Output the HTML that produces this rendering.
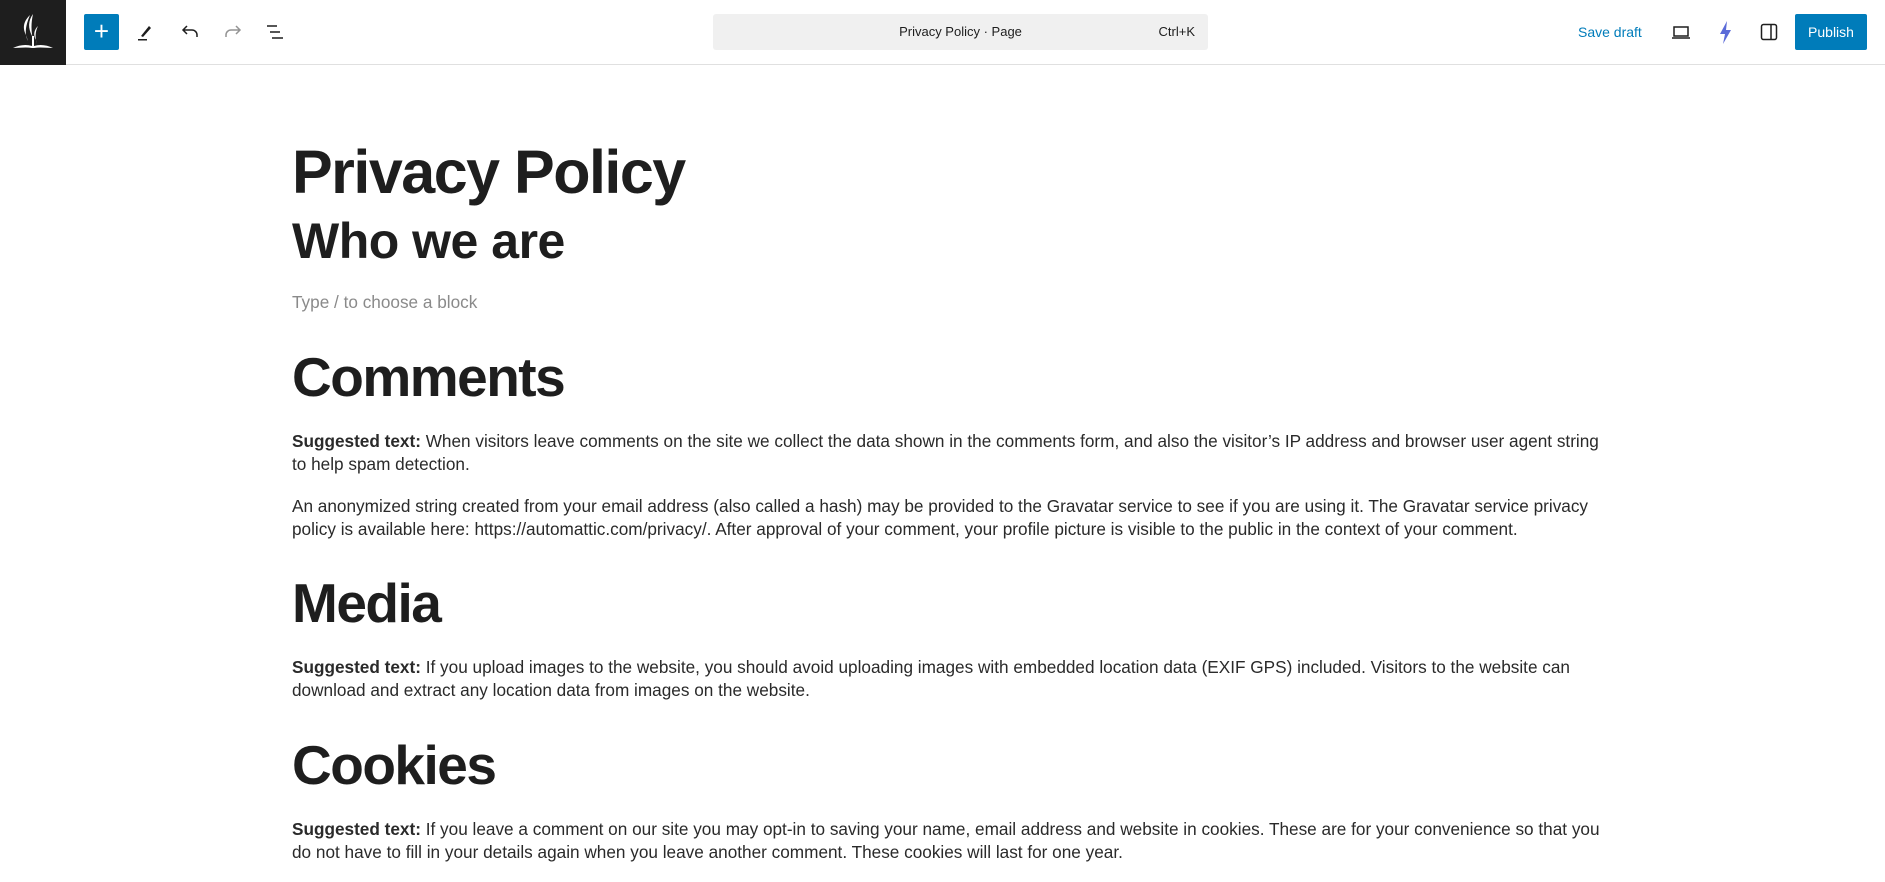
<!DOCTYPE html>
<html><head><meta charset="utf-8"><style>
*{margin:0;padding:0;box-sizing:border-box}
body{width:1885px;height:882px;overflow:hidden;background:#fff;font-family:"Liberation Sans",sans-serif;color:#1e1e1e;position:relative}
.hdr{position:absolute;left:0;top:0;width:1885px;height:65px;border-bottom:1px solid #e0e0e0;background:#fff}
.logo{position:absolute;left:0;top:0;width:66px;height:65px;background:#1e1e1e}
.abs{position:absolute}
.plus{left:84px;top:14px;width:35px;height:36px;background:#007cba;border-radius:2px;color:#fff;font-size:26px;line-height:34px;text-align:center}
.cmd{left:713px;top:14px;width:495px;height:36px;background:#f0f0f0;border-radius:3px;font-size:13px;line-height:36px}
.pub{left:1795px;top:14px;width:72px;height:36px;background:#007cba;border-radius:2px;color:#fff;font-size:14px;line-height:36px;text-align:center}
h1,h2{position:absolute;left:292px;font-weight:bold;line-height:1;white-space:nowrap;letter-spacing:-1.5px}
p{position:absolute;left:292px;font-size:17.2px;line-height:23px;white-space:nowrap;color:#2a2a2a}
</style></head><body>
<div class="hdr">
<div class="logo"><svg width="66" height="65" viewBox="0 0 66 65"><g fill="#fff"><path d="M30 15c-6 6-8 12-4 20l2 6c-4-8-2-16 2-26z"/><path d="M33 14c-5 7-5 14-1 22l1 4c-2-9-2-17 0-26z"/><path d="M38 26c-4 4-5 9-2 14l1 4c-2-6-2-12 1-18z"/><path d="M13 48c6-3 13-4 19-2v2c-6-1-13 0-19 0z"/><path d="M53 48c-6-3-13-4-19-2v2c6-1 13 0 19 0z"/><rect x="32" y="36" width="2" height="12"/></g></svg></div>
<div class="abs plus">+</div>
<svg class="abs" style="left:134px;top:20px" width="24" height="24" viewBox="0 0 24 24"><path d="M7 16l8-10 2 2-8 9z" fill="#1e1e1e"/><rect x="4" y="19" width="9" height="1.5" fill="#1e1e1e"/></svg>
<svg class="abs" style="left:178px;top:20px" width="24" height="24" viewBox="0 0 24 24"><path d="M19 17v-2a5 5 0 0 0-5-5H6M9 6l-4 4 4 4" fill="none" stroke="#1e1e1e" stroke-width="1.5"/></svg>
<svg class="abs" style="left:221px;top:20px" width="24" height="24" viewBox="0 0 24 24"><path d="M5 17v-2a5 5 0 0 1 5-5h8M15 6l4 4-4 4" fill="none" stroke="#949494" stroke-width="1.5"/></svg>
<svg class="abs" style="left:264px;top:20px" width="24" height="24" viewBox="0 0 24 24"><path d="M3 6h10M6 12h10M8 18h11" stroke="#1e1e1e" stroke-width="1.5"/></svg>
<div class="abs cmd"><span style="position:absolute;left:0;width:495px;text-align:center">Privacy Policy · Page</span><span style="position:absolute;right:13px">Ctrl+K</span></div>
<div class="abs" style="left:1578px;top:24px;font-size:14px;color:#007cba">Save draft</div>
<svg class="abs" style="left:1669px;top:20px" width="24" height="24" viewBox="0 0 24 24"><path d="M5 7h14v9H5zM3 18h18" fill="none" stroke="#1e1e1e" stroke-width="1.5"/></svg>
<svg class="abs" style="left:1713px;top:18px" width="24" height="28" viewBox="0 0 24 28"><path d="M14 3L7 16h5l-2 10 8-14h-5z" fill="#5b6bd8"/></svg>
<svg class="abs" style="left:1757px;top:20px" width="24" height="24" viewBox="0 0 24 24"><rect x="4.5" y="4.5" width="15" height="15" rx="2" fill="none" stroke="#1e1e1e" stroke-width="1.5"/><path d="M14 5v14" stroke="#1e1e1e" stroke-width="1.5"/></svg>
<div class="abs pub">Publish</div>
</div>
<h1 style="top:142px;font-size:61px">Privacy Policy</h1>
<h2 style="top:216px;font-size:50px;letter-spacing:-0.5px">Who we are</h2>
<p style="top:291px;color:#8a8a8a">Type / to choose a block</p>
<h2 style="top:350px;font-size:55px">Comments</h2>
<p style="top:430px"><b>Suggested text:</b> When visitors leave comments on the site we collect the data shown in the comments form, and also the visitor’s IP address and browser user agent string<br>to help spam detection.</p>
<p style="top:495px">An anonymized string created from your email address (also called a hash) may be provided to the Gravatar service to see if you are using it. The Gravatar service privacy<br>policy is available here: https://automattic.com/privacy/. After approval of your comment, your profile picture is visible to the public in the context of your comment.</p>
<h2 style="top:576px;font-size:55px">Media</h2>
<p style="top:656px"><b>Suggested text:</b> If you upload images to the website, you should avoid uploading images with embedded location data (EXIF GPS) included. Visitors to the website can<br>download and extract any location data from images on the website.</p>
<h2 style="top:738px;font-size:55px">Cookies</h2>
<p style="top:818px"><b>Suggested text:</b> If you leave a comment on our site you may opt-in to saving your name, email address and website in cookies. These are for your convenience so that you<br>do not have to fill in your details again when you leave another comment. These cookies will last for one year.</p>
</body></html>
